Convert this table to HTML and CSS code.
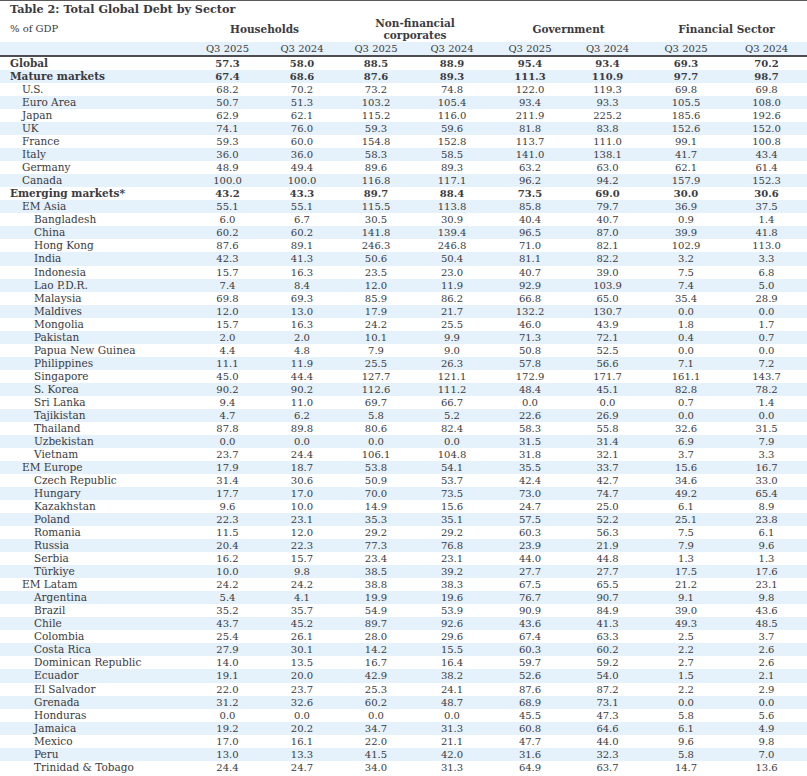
FILE: index.html
```html
<!DOCTYPE html>
<html lang="en">
<head>
<meta charset="utf-8">
<title>Table 2: Total Global Debt by Sector</title>
<link rel="stylesheet" href="styles.css">
</head>
<body>
<div class="title">Table 2: Total Global Debt by Sector</div>
<table class="debt">
<colgroup>
<col class="c-name"><col class="c75"><col class="c74"><col class="c74"><col class="c78"><col class="c78"><col class="c77"><col class="c80"><col class="c81">
</colgroup>
<thead>
<tr class="groups">
<th class="unit">% of GDP</th>
<th colspan="2">Households</th>
<th colspan="2">Non-financial<br>corporates</th>
<th colspan="2">Government</th>
<th colspan="2">Financial Sector</th>
</tr>
<tr class="quarters">
<th></th><th>Q3 2025</th><th>Q3 2024</th><th>Q3 2025</th><th>Q3 2024</th><th>Q3 2025</th><th>Q3 2024</th><th>Q3 2025</th><th>Q3 2024</th>
</tr>
</thead>
<tbody>
<tr class="b"><td class="name">Global</td><td>57.3</td><td>58.0</td><td>88.5</td><td>88.9</td><td>95.4</td><td>93.4</td><td>69.3</td><td>70.2</td></tr>
<tr class="b"><td class="name">Mature markets</td><td>67.4</td><td>68.6</td><td>87.6</td><td>89.3</td><td>111.3</td><td>110.9</td><td>97.7</td><td>98.7</td></tr>
<tr class="l1"><td class="name">U.S.</td><td>68.2</td><td>70.2</td><td>73.2</td><td>74.8</td><td>122.0</td><td>119.3</td><td>69.8</td><td>69.8</td></tr>
<tr class="l1"><td class="name">Euro Area</td><td>50.7</td><td>51.3</td><td>103.2</td><td>105.4</td><td>93.4</td><td>93.3</td><td>105.5</td><td>108.0</td></tr>
<tr class="l1"><td class="name">Japan</td><td>62.9</td><td>62.1</td><td>115.2</td><td>116.0</td><td>211.9</td><td>225.2</td><td>185.6</td><td>192.6</td></tr>
<tr class="l1"><td class="name">UK</td><td>74.1</td><td>76.0</td><td>59.3</td><td>59.6</td><td>81.8</td><td>83.8</td><td>152.6</td><td>152.0</td></tr>
<tr class="l1"><td class="name">France</td><td>59.3</td><td>60.0</td><td>154.8</td><td>152.8</td><td>113.7</td><td>111.0</td><td>99.1</td><td>100.8</td></tr>
<tr class="l1"><td class="name">Italy</td><td>36.0</td><td>36.0</td><td>58.3</td><td>58.5</td><td>141.0</td><td>138.1</td><td>41.7</td><td>43.4</td></tr>
<tr class="l1"><td class="name">Germany</td><td>48.9</td><td>49.4</td><td>89.6</td><td>89.3</td><td>63.2</td><td>63.0</td><td>62.1</td><td>61.4</td></tr>
<tr class="l1"><td class="name">Canada</td><td>100.0</td><td>100.0</td><td>116.8</td><td>117.1</td><td>96.2</td><td>94.2</td><td>157.9</td><td>152.3</td></tr>
<tr class="b"><td class="name">Emerging markets*</td><td>43.2</td><td>43.3</td><td>89.7</td><td>88.4</td><td>73.5</td><td>69.0</td><td>30.0</td><td>30.6</td></tr>
<tr class="l1"><td class="name">EM Asia</td><td>55.1</td><td>55.1</td><td>115.5</td><td>113.8</td><td>85.8</td><td>79.7</td><td>36.9</td><td>37.5</td></tr>
<tr class="l2"><td class="name">Bangladesh</td><td>6.0</td><td>6.7</td><td>30.5</td><td>30.9</td><td>40.4</td><td>40.7</td><td>0.9</td><td>1.4</td></tr>
<tr class="l2"><td class="name">China</td><td>60.2</td><td>60.2</td><td>141.8</td><td>139.4</td><td>96.5</td><td>87.0</td><td>39.9</td><td>41.8</td></tr>
<tr class="l2"><td class="name">Hong Kong</td><td>87.6</td><td>89.1</td><td>246.3</td><td>246.8</td><td>71.0</td><td>82.1</td><td>102.9</td><td>113.0</td></tr>
<tr class="l2"><td class="name">India</td><td>42.3</td><td>41.3</td><td>50.6</td><td>50.4</td><td>81.1</td><td>82.2</td><td>3.2</td><td>3.3</td></tr>
<tr class="l2"><td class="name">Indonesia</td><td>15.7</td><td>16.3</td><td>23.5</td><td>23.0</td><td>40.7</td><td>39.0</td><td>7.5</td><td>6.8</td></tr>
<tr class="l2"><td class="name">Lao P.D.R.</td><td>7.4</td><td>8.4</td><td>12.0</td><td>11.9</td><td>92.9</td><td>103.9</td><td>7.4</td><td>5.0</td></tr>
<tr class="l2"><td class="name">Malaysia</td><td>69.8</td><td>69.3</td><td>85.9</td><td>86.2</td><td>66.8</td><td>65.0</td><td>35.4</td><td>28.9</td></tr>
<tr class="l2"><td class="name">Maldives</td><td>12.0</td><td>13.0</td><td>17.9</td><td>21.7</td><td>132.2</td><td>130.7</td><td>0.0</td><td>0.0</td></tr>
<tr class="l2"><td class="name">Mongolia</td><td>15.7</td><td>16.3</td><td>24.2</td><td>25.5</td><td>46.0</td><td>43.9</td><td>1.8</td><td>1.7</td></tr>
<tr class="l2"><td class="name">Pakistan</td><td>2.0</td><td>2.0</td><td>10.1</td><td>9.9</td><td>71.3</td><td>72.1</td><td>0.4</td><td>0.7</td></tr>
<tr class="l2"><td class="name">Papua New Guinea</td><td>4.4</td><td>4.8</td><td>7.9</td><td>9.0</td><td>50.8</td><td>52.5</td><td>0.0</td><td>0.0</td></tr>
<tr class="l2"><td class="name">Philippines</td><td>11.1</td><td>11.9</td><td>25.5</td><td>26.3</td><td>57.8</td><td>56.6</td><td>7.1</td><td>7.2</td></tr>
<tr class="l2"><td class="name">Singapore</td><td>45.0</td><td>44.4</td><td>127.7</td><td>121.1</td><td>172.9</td><td>171.7</td><td>161.1</td><td>143.7</td></tr>
<tr class="l2"><td class="name">S. Korea</td><td>90.2</td><td>90.2</td><td>112.6</td><td>111.2</td><td>48.4</td><td>45.1</td><td>82.8</td><td>78.2</td></tr>
<tr class="l2"><td class="name">Sri Lanka</td><td>9.4</td><td>11.0</td><td>69.7</td><td>66.7</td><td>0.0</td><td>0.0</td><td>0.7</td><td>1.4</td></tr>
<tr class="l2"><td class="name">Tajikistan</td><td>4.7</td><td>6.2</td><td>5.8</td><td>5.2</td><td>22.6</td><td>26.9</td><td>0.0</td><td>0.0</td></tr>
<tr class="l2"><td class="name">Thailand</td><td>87.8</td><td>89.8</td><td>80.6</td><td>82.4</td><td>58.3</td><td>55.8</td><td>32.6</td><td>31.5</td></tr>
<tr class="l2"><td class="name">Uzbekistan</td><td>0.0</td><td>0.0</td><td>0.0</td><td>0.0</td><td>31.5</td><td>31.4</td><td>6.9</td><td>7.9</td></tr>
<tr class="l2"><td class="name">Vietnam</td><td>23.7</td><td>24.4</td><td>106.1</td><td>104.8</td><td>31.8</td><td>32.1</td><td>3.7</td><td>3.3</td></tr>
<tr class="l1"><td class="name">EM Europe</td><td>17.9</td><td>18.7</td><td>53.8</td><td>54.1</td><td>35.5</td><td>33.7</td><td>15.6</td><td>16.7</td></tr>
<tr class="l2"><td class="name">Czech Republic</td><td>31.4</td><td>30.6</td><td>50.9</td><td>53.7</td><td>42.4</td><td>42.7</td><td>34.6</td><td>33.0</td></tr>
<tr class="l2"><td class="name">Hungary</td><td>17.7</td><td>17.0</td><td>70.0</td><td>73.5</td><td>73.0</td><td>74.7</td><td>49.2</td><td>65.4</td></tr>
<tr class="l2"><td class="name">Kazakhstan</td><td>9.6</td><td>10.0</td><td>14.9</td><td>15.6</td><td>24.7</td><td>25.0</td><td>6.1</td><td>8.9</td></tr>
<tr class="l2"><td class="name">Poland</td><td>22.3</td><td>23.1</td><td>35.3</td><td>35.1</td><td>57.5</td><td>52.2</td><td>25.1</td><td>23.8</td></tr>
<tr class="l2"><td class="name">Romania</td><td>11.5</td><td>12.0</td><td>29.2</td><td>29.2</td><td>60.3</td><td>56.3</td><td>7.5</td><td>6.1</td></tr>
<tr class="l2"><td class="name">Russia</td><td>20.4</td><td>22.3</td><td>77.3</td><td>76.8</td><td>23.9</td><td>21.9</td><td>7.9</td><td>9.6</td></tr>
<tr class="l2"><td class="name">Serbia</td><td>16.2</td><td>15.7</td><td>23.4</td><td>23.1</td><td>44.0</td><td>44.8</td><td>1.3</td><td>1.3</td></tr>
<tr class="l2"><td class="name">Türkiye</td><td>10.0</td><td>9.8</td><td>38.5</td><td>39.2</td><td>27.7</td><td>27.7</td><td>17.5</td><td>17.6</td></tr>
<tr class="l1"><td class="name">EM Latam</td><td>24.2</td><td>24.2</td><td>38.8</td><td>38.3</td><td>67.5</td><td>65.5</td><td>21.2</td><td>23.1</td></tr>
<tr class="l2"><td class="name">Argentina</td><td>5.4</td><td>4.1</td><td>19.9</td><td>19.6</td><td>76.7</td><td>90.7</td><td>9.1</td><td>9.8</td></tr>
<tr class="l2"><td class="name">Brazil</td><td>35.2</td><td>35.7</td><td>54.9</td><td>53.9</td><td>90.9</td><td>84.9</td><td>39.0</td><td>43.6</td></tr>
<tr class="l2"><td class="name">Chile</td><td>43.7</td><td>45.2</td><td>89.7</td><td>92.6</td><td>43.6</td><td>41.3</td><td>49.3</td><td>48.5</td></tr>
<tr class="l2"><td class="name">Colombia</td><td>25.4</td><td>26.1</td><td>28.0</td><td>29.6</td><td>67.4</td><td>63.3</td><td>2.5</td><td>3.7</td></tr>
<tr class="l2"><td class="name">Costa Rica</td><td>27.9</td><td>30.1</td><td>14.2</td><td>15.5</td><td>60.3</td><td>60.2</td><td>2.2</td><td>2.6</td></tr>
<tr class="l2"><td class="name">Dominican Republic</td><td>14.0</td><td>13.5</td><td>16.7</td><td>16.4</td><td>59.7</td><td>59.2</td><td>2.7</td><td>2.6</td></tr>
<tr class="l2"><td class="name">Ecuador</td><td>19.1</td><td>20.0</td><td>42.9</td><td>38.2</td><td>52.6</td><td>54.0</td><td>1.5</td><td>2.1</td></tr>
<tr class="l2"><td class="name">El Salvador</td><td>22.0</td><td>23.7</td><td>25.3</td><td>24.1</td><td>87.6</td><td>87.2</td><td>2.2</td><td>2.9</td></tr>
<tr class="l2"><td class="name">Grenada</td><td>31.2</td><td>32.6</td><td>60.2</td><td>48.7</td><td>68.9</td><td>73.1</td><td>0.0</td><td>0.0</td></tr>
<tr class="l2"><td class="name">Honduras</td><td>0.0</td><td>0.0</td><td>0.0</td><td>0.0</td><td>45.5</td><td>47.3</td><td>5.8</td><td>5.6</td></tr>
<tr class="l2"><td class="name">Jamaica</td><td>19.2</td><td>20.2</td><td>34.7</td><td>31.3</td><td>60.8</td><td>64.6</td><td>6.1</td><td>4.9</td></tr>
<tr class="l2"><td class="name">Mexico</td><td>17.0</td><td>16.1</td><td>22.0</td><td>21.1</td><td>47.7</td><td>44.0</td><td>9.6</td><td>9.8</td></tr>
<tr class="l2"><td class="name">Peru</td><td>13.0</td><td>13.3</td><td>41.5</td><td>42.0</td><td>31.6</td><td>32.3</td><td>5.8</td><td>7.0</td></tr>
<tr class="l2"><td class="name">Trinidad &amp; Tobago</td><td>24.4</td><td>24.7</td><td>34.0</td><td>31.3</td><td>64.9</td><td>63.7</td><td>14.7</td><td>13.6</td></tr>
</tbody>
</table>
</body>
</html>
```

FILE: styles.css
```css
html, body {
  margin: 0;
  padding: 0;
  background: #ffffff;
}

body {
  color: #3b3b40;
  font-family: "DejaVu Serif", "Liberation Serif", serif;
  width: 807px;
}

.title {
  border-top: 1px solid #5a5a5a;
  height: 15px;
  line-height: 16px;
  padding-left: 10px;
  font-size: 11.2px;
  font-weight: bold;
  color: #3a3a40;
  white-space: nowrap;
}

.debt {
  width: 807px;
  border-collapse: collapse;
  table-layout: fixed;
  border-spacing: 0;
}

.c-name { width: 190px; }
.c75 { width: 75px; }
.c74 { width: 74px; }
.c78 { width: 78px; }
.c77 { width: 77px; }
.c80 { width: 80px; }
.c81 { width: 81px; }

.groups th {
  height: 26px;
  padding: 0;
  font-size: 10.5px;
  line-height: 12px;
  font-weight: bold;
  text-align: center;
  vertical-align: middle;
}

.groups th.unit {
  text-align: left;
  padding-left: 10px;
  font-size: 10px;
  font-weight: normal;
}

.quarters th {
  height: 13px;
  padding: 0;
  background: #e5f1fb;
  border-bottom: 2px solid #4e4e52;
  font-size: 10px;
  line-height: 13px;
  font-weight: normal;
  text-align: center;
}

.debt tbody td {
  height: 13.04px;
  padding: 0;
  font-size: 10px;
  line-height: 13px;
  text-align: center;
  white-space: nowrap;
  overflow: hidden;
}

.debt tbody tr:nth-child(even) {
  background: #e5f1fb;
}

.debt tbody td.name {
  text-align: left;
  padding-left: 10px;
  font-size: 10.5px;
}

.debt tbody tr.l1 td.name {
  padding-left: 22px;
}

.debt tbody tr.l2 td.name {
  padding-left: 34px;
}

.debt tbody tr.b td {
  font-weight: bold;
}
```
